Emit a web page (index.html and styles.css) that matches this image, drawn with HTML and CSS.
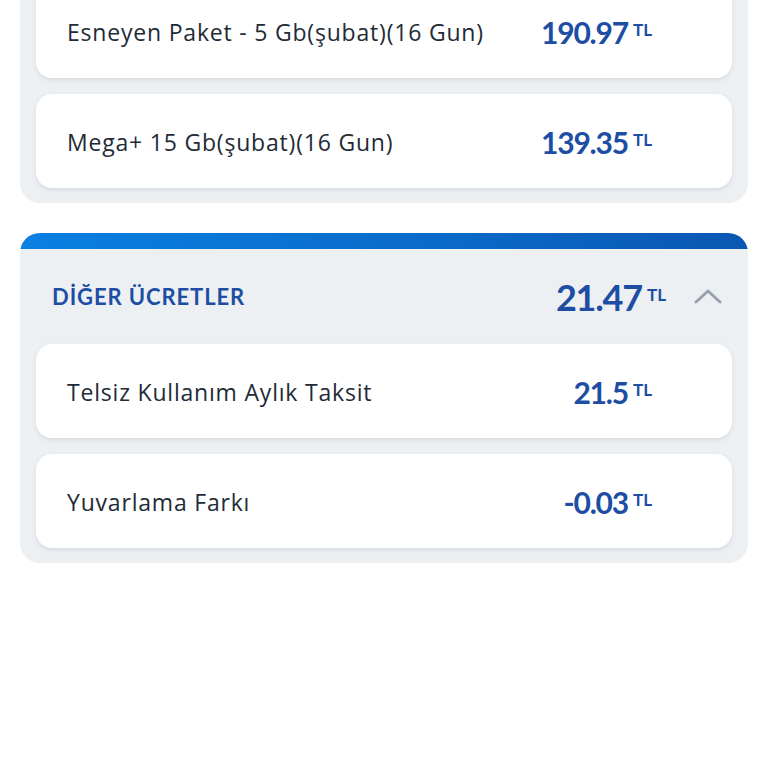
FILE: index.html
```html
<!DOCTYPE html>
<html lang="tr">
<head>
<meta charset="utf-8">
<link rel="stylesheet" href="styles.css">
</head>
<body>
<div class="page">
  <section class="group group-plain">
    <div class="card">
      <span class="label">Esneyen Paket - 5 Gb(şubat)(16 Gun)</span>
      <span class="amount"><span class="num">190.97</span><span class="cur">TL</span></span>
    </div>
    <div class="card">
      <span class="label">Mega+ 15 Gb(şubat)(16 Gun)</span>
      <span class="amount"><span class="num">139.35</span><span class="cur">TL</span></span>
    </div>
  </section>

  <section class="group group-open">
    <div class="group-bar"></div>
    <div class="group-head">
      <span class="title">DİĞER ÜCRETLER</span>
      <span class="amount big"><span class="num">21.47</span><span class="cur">TL</span></span>
      <svg class="chev" width="28" height="16" viewBox="0 0 28 16"><path d="M2 14 L14 3 L26 14" fill="none" stroke="#98a1ab" stroke-width="3" stroke-linecap="round" stroke-linejoin="round"/></svg>
    </div>
    <div class="cards">
      <div class="card">
        <span class="label">Telsiz Kullanım Aylık Taksit</span>
        <span class="amount"><span class="num">21.5</span><span class="cur">TL</span></span>
      </div>
      <div class="card">
        <span class="label">Yuvarlama Farkı</span>
        <span class="amount"><span class="num">-0.03</span><span class="cur">TL</span></span>
      </div>
    </div>
  </section>
</div>
</body>
</html>
```

FILE: styles.css
```css
* { box-sizing: border-box; }
html, body { margin: 0; padding: 0; background: #ffffff; }
body { font-family: "Lato", "Noto Sans", sans-serif; color: #1f2833; }

.page {
  padding: 0 20px;
  display: flex;
  flex-direction: column;
  gap: 30px;
}

.group {
  background: #edf0f3;
  border-radius: 20px;
  display: flex;
  flex-direction: column;
}

.group-plain {
  margin-top: -16px;
  border-radius: 0 0 20px 20px;
  padding: 0 16px 15px;
  gap: 16px;
}

.group-open { overflow: hidden; }

.group-bar {
  height: 16px;
  background: linear-gradient(90deg, #0a80e2 0%, #0a6dcc 50%, #0a57b2 100%);
}

.group-head {
  height: 95px;
  display: flex;
  align-items: center;
  padding: 0 26px 0 32px;
}

.title {
  flex: 1;
  font-weight: 700;
  font-size: 22px;
  color: #1d4ea3;
  letter-spacing: 0.9px;
}

.chev { margin-left: 28px; margin-top: -2px; }

.cards {
  display: flex;
  flex-direction: column;
  gap: 16px;
  padding: 0 16px 15px;
}

.card {
  height: 94px;
  background: #ffffff;
  border-radius: 16px;
  box-shadow: 0 2px 4px rgba(60, 72, 88, 0.12);
  display: flex;
  align-items: center;
  justify-content: space-between;
  padding: 1px 80px 0 31px;
}

.label {
  font-family: "Open Sans", "Lato", sans-serif;
  font-size: 23px;
  color: #222b35;
  letter-spacing: 0.8px;
}

.amount {
  display: flex;
  align-items: center;
  color: #1d4ea3;
  font-weight: 700;
}

.num {
  font-size: 30px;
  letter-spacing: -1.2px;
}

.cur {
  font-size: 17px;
  margin-left: 5px;
  margin-top: -4px;
}

.big .num { font-size: 36px; }
```
